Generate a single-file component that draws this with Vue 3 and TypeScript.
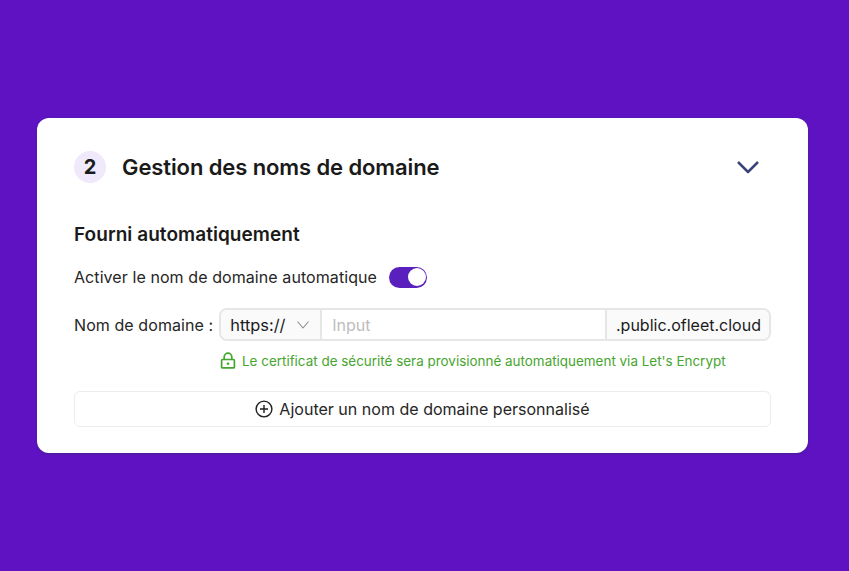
<template>
  <div class="page">
    <section class="card">
      <header class="head">
        <span class="step">2</span>
        <h1 class="title">Gestion des noms de domaine</h1>
        <svg class="collapse" width="24" height="14" viewBox="0 0 24 14" fill="none">
          <path d="M2 2 L12 12 L22 2" stroke="#3a4478" stroke-width="2.5" stroke-linejoin="round" />
        </svg>
      </header>

      <h2 class="subtitle">Fourni automatiquement</h2>

      <div class="toggle-row">
        <span class="label">Activer le nom de domaine automatique</span>
        <span class="toggle"><span class="knob"></span></span>
      </div>

      <div class="domain-row">
        <span class="label">Nom de domaine :</span>
        <div class="domain-field">
          <div class="scheme">
            <span>https://</span>
            <svg width="12" height="8" viewBox="0 0 12 8" fill="none">
              <path d="M0.5 0.5 L6 7 L11.5 0.5" stroke="#8c8c8c" stroke-width="1.1" />
            </svg>
          </div>
          <input class="host" type="text" placeholder="Input" />
          <div class="suffix">.public.ofleet.cloud</div>
        </div>
      </div>

      <p class="hint">
        <svg width="16" height="18" viewBox="0 0 16 18" fill="none">
          <path d="M4.2 7.5 V5 a3.8 3.8 0 0 1 7.6 0 V7.5" stroke="#46a52e" stroke-width="1.7" />
          <rect x="1.6" y="7.5" width="12.8" height="8.4" rx="1" stroke="#46a52e" stroke-width="1.7" />
          <rect x="6.8" y="10.6" width="2.4" height="2.2" fill="#46a52e" />
        </svg>
        Le certificat de sécurité sera provisionné automatiquement via Let's Encrypt
      </p>

      <button class="add" type="button">
        <svg width="18" height="18" viewBox="0 0 18 18" fill="none">
          <circle cx="9" cy="9" r="7.9" stroke="#1f1f1f" stroke-width="1.4" />
          <path d="M9 5 V13 M5 9 H13" stroke="#1f1f1f" stroke-width="1.4" />
        </svg>
        Ajouter un nom de domaine personnalisé
      </button>
    </section>
  </div>
</template>

<script setup lang="ts">
</script>

<style>
body {
  margin: 0;
}
</style>

<style scoped>
.page {
  box-sizing: border-box;
  width: 849px;
  height: 571px;
  padding: 118px 41px 0 37px;
  background: #5e12c1;
  font-family: Inter, "Liberation Sans", sans-serif;
  color: #1a1a1a;
}

.card {
  box-sizing: border-box;
  height: 335px;
  padding: 33px 37px 0;
  background: #fff;
  border-radius: 12px;
  box-shadow: 0 1px 2px rgba(60, 40, 110, 0.6);
}

.head {
  display: flex;
  align-items: center;
  height: 32px;
}

.step {
  display: flex;
  align-items: center;
  justify-content: center;
  width: 32px;
  height: 32px;
  margin-right: 16px;
  border-radius: 50%;
  background: #efe9fb;
  font-size: 20px;
  font-weight: 700;
}

.title {
  margin: 0;
  font-size: 22px;
  font-weight: 600;
  letter-spacing: -0.1px;
}

.collapse {
  margin-left: auto;
  margin-right: 11px;
}

.subtitle {
  margin: 39px 0 0;
  height: 25px;
  line-height: 25px;
  font-size: 19px;
  font-weight: 600;
  letter-spacing: 0.05px;
}

.toggle-row {
  display: flex;
  align-items: center;
  gap: 12px;
  height: 24px;
  margin-top: 18px;
}

.label {
  font-size: 16px;
  line-height: 24px;
  letter-spacing: 0.08px;
  color: #262626;
}

.toggle {
  display: flex;
  justify-content: flex-end;
  align-items: center;
  box-sizing: border-box;
  width: 38px;
  height: 21px;
  padding-right: 1.5px;
  border-radius: 11px;
  background: #5a20bd;
}

.knob {
  width: 18px;
  height: 18px;
  border-radius: 50%;
  background: #fff;
}

.domain-row {
  display: flex;
  align-items: center;
  gap: 6px;
  margin-top: 19px;
}

.domain-field {
  display: flex;
  flex: 1;
  box-sizing: border-box;
  height: 33px;
  border: 2px solid #e6e6e6;
  border-radius: 8px;
  overflow: hidden;
  font-size: 16px;
}

.scheme {
  display: flex;
  align-items: center;
  gap: 12px;
  box-sizing: border-box;
  width: 101px;
  padding-left: 9px;
  background: #fafafa;
  border-right: 2px solid #e6e6e6;
  font-size: 16.4px;
}

.host {
  flex: 1;
  min-width: 0;
  padding: 0 10px;
  border: 0;
  outline: 0;
  font: inherit;
}

.host::placeholder {
  color: #bdbdbd;
  opacity: 1;
}

.suffix {
  display: flex;
  align-items: center;
  box-sizing: border-box;
  width: 164px;
  padding-left: 9px;
  background: #fafafa;
  border-left: 2px solid #e6e6e6;
  white-space: nowrap;
}

.hint {
  display: flex;
  align-items: center;
  gap: 6px;
  margin: 10px 0 0 146px;
  height: 20px;
  font-size: 13.45px;
  color: #46a52e;
}

.add {
  display: flex;
  align-items: center;
  justify-content: center;
  gap: 6px;
  width: 100%;
  height: 36px;
  margin-top: 20px;
  border: 1px solid #ececec;
  border-radius: 6px;
  background: #fff;
  font-family: inherit;
  font-size: 16.05px;
  color: #262626;
}
</style>
